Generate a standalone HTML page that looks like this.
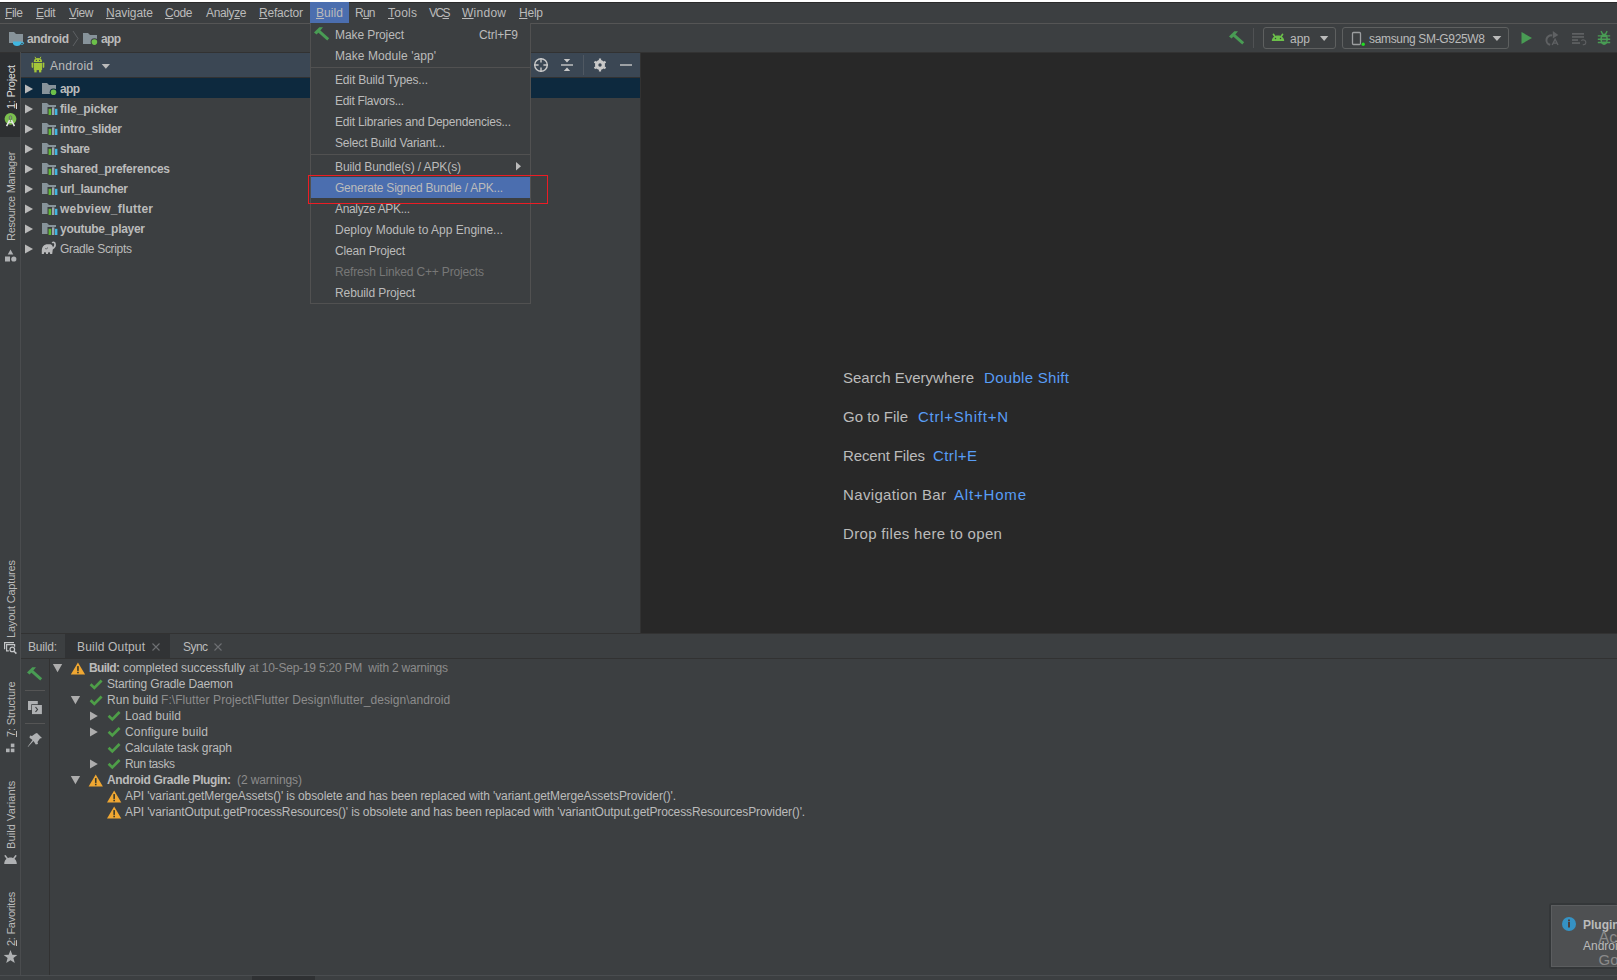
<!DOCTYPE html>
<html><head><meta charset="utf-8">
<style>
*{margin:0;padding:0;box-sizing:border-box}
html,body{width:1617px;height:980px;overflow:hidden;background:#3C3F41;font-family:"Liberation Sans",sans-serif;font-size:12px;color:#BBBBBB}
.a{position:absolute}
.t{position:absolute;white-space:pre;line-height:1}
u{text-decoration:underline;text-underline-offset:1px}
svg{position:absolute;overflow:visible}
</style></head><body>
<div class="a" style="left:0px;top:0px;width:1617px;height:2px;background:#FFFFFF;"></div>
<div class="a" style="left:0px;top:2px;width:1617px;height:1px;background:#2B2B2B;"></div>
<div class="a" style="left:0px;top:3px;width:1617px;height:20px;background:#3C3F41;"></div>
<div class="a" style="left:0px;top:23px;width:1617px;height:1px;background:#555555;"></div>
<div class="a" style="left:310px;top:2px;width:39px;height:21px;background:#4B6EAF;"></div>
<div class="a" style="left:0px;top:24px;width:1617px;height:28px;background:#3C3F41;"></div>
<div class="a" style="left:0px;top:52px;width:20px;height:923px;background:#3C3F41;"></div>
<div class="a" style="left:20px;top:52px;width:1px;height:923px;background:#4A4C4E;"></div>
<div class="a" style="left:0px;top:52px;width:20px;height:85px;background:#2D2F31;"></div>
<div class="a" style="left:21px;top:52px;width:619px;height:581px;background:#3C3F41;"></div>
<div class="a" style="left:21px;top:53px;width:619px;height:24px;background:#3B4754;"></div>
<div class="a" style="left:21px;top:77px;width:619px;height:1px;background:#323232;"></div>
<div class="a" style="left:21px;top:78px;width:619px;height:20px;background:#0D293E;"></div>
<div class="a" style="left:640px;top:52px;width:1px;height:581px;background:#323232;"></div>
<div class="a" style="left:641px;top:52px;width:976px;height:581px;background:#282828;"></div>
<div class="a" style="left:0px;top:52px;width:1617px;height:1px;background:#323232;"></div>
<div class="a" style="left:20px;top:52px;width:1px;height:923px;background:#4A4C4E;"></div>
<div class="a" style="left:21px;top:633px;width:1596px;height:1px;background:#323232;"></div>
<div class="a" style="left:21px;top:658px;width:1596px;height:1px;background:#323232;"></div>
<div class="a" style="left:65px;top:634px;width:105px;height:24px;background:#313335;"></div>
<div class="a" style="left:49px;top:659px;width:1px;height:316px;background:#323232;"></div>
<div class="a" style="left:0px;top:975px;width:1617px;height:1px;background:#4A4D50;"></div>
<div class="a" style="left:252px;top:976px;width:63px;height:4px;background:#2F3133;"></div>
<div class="t" style="left:5px;top:6.84px;font-size:12px;letter-spacing:-0.448px;color:#BBBBBB;"><u>F</u>ile</div>
<div class="t" style="left:36px;top:6.84px;font-size:12px;letter-spacing:-0.391px;color:#BBBBBB;"><u>E</u>dit</div>
<div class="t" style="left:69px;top:6.84px;font-size:12px;letter-spacing:-0.432px;color:#BBBBBB;"><u>V</u>iew</div>
<div class="t" style="left:106px;top:6.84px;font-size:12px;letter-spacing:-0.051px;color:#BBBBBB;"><u>N</u>avigate</div>
<div class="t" style="left:165px;top:6.84px;font-size:12px;letter-spacing:-0.396px;color:#BBBBBB;"><u>C</u>ode</div>
<div class="t" style="left:206px;top:6.84px;font-size:12px;letter-spacing:-0.365px;color:#BBBBBB;">Analy<u>z</u>e</div>
<div class="t" style="left:259px;top:6.84px;font-size:12px;letter-spacing:-0.192px;color:#BBBBBB;"><u>R</u>efactor</div>
<div class="t" style="left:316px;top:6.84px;font-size:12px;letter-spacing:0.078px;color:#BBBBBB;"><u>B</u>uild</div>
<div class="t" style="left:355px;top:6.84px;font-size:12px;letter-spacing:-0.758px;color:#BBBBBB;">R<u>u</u>n</div>
<div class="t" style="left:388px;top:6.84px;font-size:12px;letter-spacing:0.246px;color:#BBBBBB;"><u>T</u>ools</div>
<div class="t" style="left:429px;top:6.84px;font-size:12px;letter-spacing:-1.586px;color:#BBBBBB;">VC<u>S</u></div>
<div class="t" style="left:462px;top:6.84px;font-size:12px;letter-spacing:0.263px;color:#BBBBBB;"><u>W</u>indow</div>
<div class="t" style="left:519px;top:6.84px;font-size:12px;letter-spacing:-0.229px;color:#BBBBBB;"><u>H</u>elp</div>
<div class="t" style="left:27px;top:32.84px;font-size:12px;letter-spacing:-0.331px;color:#BBBBBB;font-weight:bold;">android</div>
<div class="t" style="left:101px;top:32.84px;font-size:12px;letter-spacing:-0.664px;color:#BBBBBB;font-weight:bold;">app</div>
<div class="t" style="left:1290px;top:32.84px;font-size:12px;letter-spacing:-0.008px;color:#BBBBBB;">app</div>
<div class="t" style="left:1369px;top:32.84px;font-size:12px;letter-spacing:-0.335px;color:#BBBBBB;">samsung SM-G925W8</div>
<div class="a" style="left:1263px;top:27px;width:73px;height:22px;background:transparent;border:1px solid #5E6060;border-radius:3px;"></div>
<div class="a" style="left:1342px;top:27px;width:167px;height:22px;background:transparent;border:1px solid #5E6060;border-radius:3px;"></div>
<div class="a" style="left:1253px;top:28px;width:1px;height:20px;background:#505254;"></div>
<div class="t" style="left:50px;top:59.84px;font-size:12px;letter-spacing:0.273px;color:#BBBBBB;">Android</div>
<div class="a" style="left:583px;top:55px;width:1px;height:20px;background:#4F5862;"></div>
<div class="t" style="left:60px;top:82.84px;font-size:12px;letter-spacing:-0.664px;color:#BBBBBB;font-weight:bold;">app</div>
<div class="t" style="left:60px;top:102.84px;font-size:12px;letter-spacing:-0.134px;color:#BBBBBB;font-weight:bold;">file_picker</div>
<div class="t" style="left:60px;top:122.84px;font-size:12px;letter-spacing:-0.303px;color:#BBBBBB;font-weight:bold;">intro_slider</div>
<div class="t" style="left:60px;top:142.84px;font-size:12px;letter-spacing:-0.504px;color:#BBBBBB;font-weight:bold;">share</div>
<div class="t" style="left:60px;top:162.84px;font-size:12px;letter-spacing:-0.238px;color:#BBBBBB;font-weight:bold;">shared_preferences</div>
<div class="t" style="left:60px;top:182.84px;font-size:12px;letter-spacing:-0.364px;color:#BBBBBB;font-weight:bold;">url_launcher</div>
<div class="t" style="left:60px;top:202.84px;font-size:12px;letter-spacing:0.214px;color:#BBBBBB;font-weight:bold;">webview_flutter</div>
<div class="t" style="left:60px;top:222.84px;font-size:12px;letter-spacing:-0.282px;color:#BBBBBB;font-weight:bold;">youtube_player</div>
<div class="t" style="left:60px;top:242.84px;font-size:12px;letter-spacing:-0.309px;color:#BBBBBB;">Gradle Scripts</div>
<div class="t" style="left:843px;top:370.30px;font-size:15px;letter-spacing:0.006px;color:#BBBBBB;">Search Everywhere</div>
<div class="t" style="left:984px;top:370.30px;font-size:15px;letter-spacing:0.298px;color:#589DF6;">Double Shift</div>
<div class="t" style="left:843px;top:409.30px;font-size:15px;letter-spacing:-0.003px;color:#BBBBBB;">Go to File</div>
<div class="t" style="left:918px;top:409.30px;font-size:15px;letter-spacing:0.754px;color:#589DF6;">Ctrl+Shift+N</div>
<div class="t" style="left:843px;top:448.30px;font-size:15px;letter-spacing:-0.124px;color:#BBBBBB;">Recent Files</div>
<div class="t" style="left:933px;top:448.30px;font-size:15px;letter-spacing:0.381px;color:#589DF6;">Ctrl+E</div>
<div class="t" style="left:843px;top:487.30px;font-size:15px;letter-spacing:0.355px;color:#BBBBBB;">Navigation Bar</div>
<div class="t" style="left:954px;top:487.30px;font-size:15px;letter-spacing:0.817px;color:#589DF6;">Alt+Home</div>
<div class="t" style="left:843px;top:526.30px;font-size:15px;letter-spacing:0.327px;color:#BBBBBB;">Drop files here to open</div>
<div class="t" style="left:28px;top:640.84px;font-size:12px;letter-spacing:-0.203px;color:#BBBBBB;">Build:</div>
<div class="t" style="left:77px;top:640.84px;font-size:12px;letter-spacing:0.180px;color:#BBBBBB;">Build Output</div>
<div class="t" style="left:183px;top:640.84px;font-size:12px;letter-spacing:-0.557px;color:#BBBBBB;">Sync</div>
<div class="t" style="left:89px;top:661.84px;font-size:12px;letter-spacing:-0.597px;color:#BBBBBB;font-weight:bold;">Build:</div>
<div class="t" style="left:123px;top:661.84px;font-size:12px;letter-spacing:-0.065px;color:#BBBBBB;">completed successfully</div>
<div class="t" style="left:249px;top:661.84px;font-size:12px;letter-spacing:-0.214px;color:#8C8C8C;">at 10-Sep-19 5:20 PM  with 2 warnings</div>
<div class="t" style="left:107px;top:677.84px;font-size:12px;letter-spacing:-0.161px;color:#BBBBBB;">Starting Gradle Daemon</div>
<div class="t" style="left:107px;top:693.84px;font-size:12px;letter-spacing:0.037px;color:#BBBBBB;">Run build</div>
<div class="t" style="left:161px;top:693.84px;font-size:12px;letter-spacing:0.066px;color:#8C8C8C;">F:\Flutter Project\Flutter Design\flutter_design\android</div>
<div class="t" style="left:125px;top:709.84px;font-size:12px;letter-spacing:0.069px;color:#BBBBBB;">Load build</div>
<div class="t" style="left:125px;top:725.84px;font-size:12px;letter-spacing:0.163px;color:#BBBBBB;">Configure build</div>
<div class="t" style="left:125px;top:741.84px;font-size:12px;letter-spacing:-0.125px;color:#BBBBBB;">Calculate task graph</div>
<div class="t" style="left:125px;top:757.84px;font-size:12px;letter-spacing:-0.418px;color:#BBBBBB;">Run tasks</div>
<div class="t" style="left:107px;top:773.84px;font-size:12px;letter-spacing:-0.347px;color:#BBBBBB;font-weight:bold;">Android Gradle Plugin:</div>
<div class="t" style="left:237px;top:773.84px;font-size:12px;letter-spacing:-0.094px;color:#8C8C8C;">(2 warnings)</div>
<div class="t" style="left:125px;top:789.84px;font-size:12px;letter-spacing:-0.106px;color:#BBBBBB;">API 'variant.getMergeAssets()' is obsolete and has been replaced with 'variant.getMergeAssetsProvider()'.</div>
<div class="t" style="left:125px;top:805.84px;font-size:12px;letter-spacing:-0.122px;color:#BBBBBB;">API 'variantOutput.getProcessResources()' is obsolete and has been replaced with 'variantOutput.getProcessResourcesProvider()'.</div>
<div class="a" style="left:310px;top:23px;width:221px;height:281px;background:#3C3F41;border:1px solid #515151;border-top:none;"></div>
<div class="a" style="left:311px;top:67px;width:219px;height:1px;background:#515151;"></div>
<div class="a" style="left:311px;top:154px;width:219px;height:1px;background:#515151;"></div>
<div class="a" style="left:311px;top:177px;width:219px;height:21px;background:#4B6EAF;"></div>
<div class="t" style="left:335px;top:28.84px;font-size:12px;letter-spacing:-0.092px;color:#BBBBBB;">Make Project</div>
<div class="t" style="left:335px;top:49.84px;font-size:12px;letter-spacing:0.064px;color:#BBBBBB;">Make Module 'app'</div>
<div class="t" style="left:335px;top:73.84px;font-size:12px;letter-spacing:-0.155px;color:#BBBBBB;">Edit Build Types...</div>
<div class="t" style="left:335px;top:94.84px;font-size:12px;letter-spacing:-0.309px;color:#BBBBBB;">Edit Flavors...</div>
<div class="t" style="left:335px;top:115.84px;font-size:12px;letter-spacing:-0.224px;color:#BBBBBB;">Edit Libraries and Dependencies...</div>
<div class="t" style="left:335px;top:136.84px;font-size:12px;letter-spacing:-0.173px;color:#BBBBBB;">Select Build Variant...</div>
<div class="t" style="left:335px;top:160.84px;font-size:12px;letter-spacing:-0.118px;color:#BBBBBB;">Build Bundle(s) / APK(s)</div>
<div class="t" style="left:335px;top:181.84px;font-size:12px;letter-spacing:-0.223px;color:#BBBBBB;">Generate Signed Bundle / APK...</div>
<div class="t" style="left:335px;top:202.84px;font-size:12px;letter-spacing:-0.334px;color:#BBBBBB;">Analyze APK...</div>
<div class="t" style="left:335px;top:223.84px;font-size:12px;letter-spacing:-0.002px;color:#BBBBBB;">Deploy Module to App Engine...</div>
<div class="t" style="left:335px;top:244.84px;font-size:12px;letter-spacing:-0.169px;color:#BBBBBB;">Clean Project</div>
<div class="t" style="left:335px;top:265.84px;font-size:12px;letter-spacing:-0.169px;color:#777777;">Refresh Linked C++ Projects</div>
<div class="t" style="left:335px;top:286.84px;font-size:12px;letter-spacing:-0.098px;color:#BBBBBB;">Rebuild Project</div>
<div class="t" style="left:479px;top:28.84px;font-size:12px;letter-spacing:-0.115px;color:#BBBBBB;">Ctrl+F9</div>
<div class="a" style="left:308px;top:175px;width:240px;height:29px;background:transparent;border:1px solid #EC1C24;"></div>
<svg style="left:20px;top:82.5px" width="20" height="12" viewBox="20 82.5 20 12"><path d="M25 84.0 L33 88.5 L25 93.0 Z" fill="#B9B9B9"/></svg>
<svg style="left:20px;top:102.5px" width="20" height="12" viewBox="20 102.5 20 12"><path d="M25 104.0 L33 108.5 L25 113.0 Z" fill="#B9B9B9"/></svg>
<svg style="left:20px;top:122.5px" width="20" height="12" viewBox="20 122.5 20 12"><path d="M25 124.0 L33 128.5 L25 133.0 Z" fill="#B9B9B9"/></svg>
<svg style="left:20px;top:142.5px" width="20" height="12" viewBox="20 142.5 20 12"><path d="M25 144.0 L33 148.5 L25 153.0 Z" fill="#B9B9B9"/></svg>
<svg style="left:20px;top:162.5px" width="20" height="12" viewBox="20 162.5 20 12"><path d="M25 164.0 L33 168.5 L25 173.0 Z" fill="#B9B9B9"/></svg>
<svg style="left:20px;top:182.5px" width="20" height="12" viewBox="20 182.5 20 12"><path d="M25 184.0 L33 188.5 L25 193.0 Z" fill="#B9B9B9"/></svg>
<svg style="left:20px;top:202.5px" width="20" height="12" viewBox="20 202.5 20 12"><path d="M25 204.0 L33 208.5 L25 213.0 Z" fill="#B9B9B9"/></svg>
<svg style="left:20px;top:222.5px" width="20" height="12" viewBox="20 222.5 20 12"><path d="M25 224.0 L33 228.5 L25 233.0 Z" fill="#B9B9B9"/></svg>
<svg style="left:20px;top:242.5px" width="20" height="12" viewBox="20 242.5 20 12"><path d="M25 244.0 L33 248.5 L25 253.0 Z" fill="#B9B9B9"/></svg>
<svg style="left:40px;top:80px" width="20" height="18" viewBox="40 80 20 18"><path d="M42 83 h5 l2 2 h7 v9 h-14 z" fill="#87939A"/><circle cx="53.5" cy="92.3" r="3.8" fill="#0D293E"/><circle cx="53.5" cy="92.3" r="2.8" fill="#6CC04A"/></svg>
<svg style="left:40px;top:101px" width="20" height="18" viewBox="40 101 20 18"><path d="M42 103 h5 l2 2 h7 v9 h-14 z" fill="#87939A"/><rect x="47.5" y="107" width="10.5" height="9" fill="#3C3F41"/><rect x="48.6" y="108.8" width="2.6" height="6.2" fill="#5FB832"/><rect x="52" y="107.3" width="2.4" height="7.7" fill="#9AA7B0"/><rect x="55" y="108.8" width="2.4" height="6.2" fill="#40B6E0"/></svg>
<svg style="left:40px;top:121px" width="20" height="18" viewBox="40 121 20 18"><path d="M42 123 h5 l2 2 h7 v9 h-14 z" fill="#87939A"/><rect x="47.5" y="127" width="10.5" height="9" fill="#3C3F41"/><rect x="48.6" y="128.8" width="2.6" height="6.2" fill="#5FB832"/><rect x="52" y="127.3" width="2.4" height="7.7" fill="#9AA7B0"/><rect x="55" y="128.8" width="2.4" height="6.2" fill="#40B6E0"/></svg>
<svg style="left:40px;top:141px" width="20" height="18" viewBox="40 141 20 18"><path d="M42 143 h5 l2 2 h7 v9 h-14 z" fill="#87939A"/><rect x="47.5" y="147" width="10.5" height="9" fill="#3C3F41"/><rect x="48.6" y="148.8" width="2.6" height="6.2" fill="#5FB832"/><rect x="52" y="147.3" width="2.4" height="7.7" fill="#9AA7B0"/><rect x="55" y="148.8" width="2.4" height="6.2" fill="#40B6E0"/></svg>
<svg style="left:40px;top:161px" width="20" height="18" viewBox="40 161 20 18"><path d="M42 163 h5 l2 2 h7 v9 h-14 z" fill="#87939A"/><rect x="47.5" y="167" width="10.5" height="9" fill="#3C3F41"/><rect x="48.6" y="168.8" width="2.6" height="6.2" fill="#5FB832"/><rect x="52" y="167.3" width="2.4" height="7.7" fill="#9AA7B0"/><rect x="55" y="168.8" width="2.4" height="6.2" fill="#40B6E0"/></svg>
<svg style="left:40px;top:181px" width="20" height="18" viewBox="40 181 20 18"><path d="M42 183 h5 l2 2 h7 v9 h-14 z" fill="#87939A"/><rect x="47.5" y="187" width="10.5" height="9" fill="#3C3F41"/><rect x="48.6" y="188.8" width="2.6" height="6.2" fill="#5FB832"/><rect x="52" y="187.3" width="2.4" height="7.7" fill="#9AA7B0"/><rect x="55" y="188.8" width="2.4" height="6.2" fill="#40B6E0"/></svg>
<svg style="left:40px;top:201px" width="20" height="18" viewBox="40 201 20 18"><path d="M42 203 h5 l2 2 h7 v9 h-14 z" fill="#87939A"/><rect x="47.5" y="207" width="10.5" height="9" fill="#3C3F41"/><rect x="48.6" y="208.8" width="2.6" height="6.2" fill="#5FB832"/><rect x="52" y="207.3" width="2.4" height="7.7" fill="#9AA7B0"/><rect x="55" y="208.8" width="2.4" height="6.2" fill="#40B6E0"/></svg>
<svg style="left:40px;top:221px" width="20" height="18" viewBox="40 221 20 18"><path d="M42 223 h5 l2 2 h7 v9 h-14 z" fill="#87939A"/><rect x="47.5" y="227" width="10.5" height="9" fill="#3C3F41"/><rect x="48.6" y="228.8" width="2.6" height="6.2" fill="#5FB832"/><rect x="52" y="227.3" width="2.4" height="7.7" fill="#9AA7B0"/><rect x="55" y="228.8" width="2.4" height="6.2" fill="#40B6E0"/></svg>
<svg style="left:38px;top:238px" width="22" height="20" viewBox="38 238 22 20"><path d="M41.8 254 L41.8 250 C42 247 43.5 244.8 46.5 244.2 L50.5 244.2 C52 244.6 52.8 246 53 247.5 L52.6 251 L52.2 254 L50.2 254 L49.8 252.3 L48.3 252.3 L47.9 254 L46.1 254 L45.7 252.3 L44.2 252.3 L43.8 254 Z" fill="#B8B9BA"/><path d="M52 249 C54.5 247.5 55.5 245 54.8 243.2 C54.3 242 53 242 52.3 243" fill="none" stroke="#B8B9BA" stroke-width="1.7"/><path d="M45.2 248.6 Q46.6 249.4 48 247.6" fill="none" stroke="#55585A" stroke-width="0.9"/></svg>
<svg style="left:5px;top:28px" width="25" height="22" viewBox="5 28 25 22"><path d="M9 32 h5 l2 2 h7 v9 h-14 z" fill="#87939A"/><path d="M13 41.5 h8 v1.8 c0 1.6 -1.6 2.7 -4 2.7 c-2.4 0 -4 -1.1 -4 -2.7 z" fill="#40B6E0"/><ellipse cx="22" cy="43.2" rx="1.7" ry="1.1" fill="none" stroke="#40B6E0" stroke-width="1"/></svg>
<svg style="left:70px;top:28px" width="12" height="20" viewBox="70 28 12 20"><path d="M73 31 L78 38.5 L73 46" fill="none" stroke="#5E6164" stroke-width="1"/></svg>
<svg style="left:80px;top:30px" width="20" height="18" viewBox="80 30 20 18"><path d="M83 33 h5 l2 2 h7 v9 h-14 z" fill="#87939A"/><circle cx="94.4" cy="42.1" r="3.8" fill="#3C3F41"/><circle cx="94.4" cy="42.1" r="2.8" fill="#6CC04A"/></svg>
<svg style="left:28px;top:54px" width="20" height="22" viewBox="28 54 20 22"><g fill="#A4C639"><path d="M33.8 62 a4.15 4 0 0 1 8.3 0 z"/><rect x="33.8" y="62.9" width="8.3" height="7.2"/><rect x="31.6" y="62.5" width="1.6" height="5.4" rx="0.8"/><rect x="42.7" y="62.5" width="1.6" height="5.4" rx="0.8"/><rect x="34.3" y="69" width="2.3" height="3.4"/><rect x="39" y="69" width="2.3" height="3.4"/><path d="M35 56.8 L36 58.8 M40.9 56.8 L39.9 58.8" stroke="#A4C639" stroke-width="1"/></g><circle cx="36.4" cy="60.4" r="0.6" fill="#3B4754"/><circle cx="39.6" cy="60.4" r="0.6" fill="#3B4754"/></svg>
<svg style="left:98px;top:60px" width="16" height="12" viewBox="98 60 16 12"><path d="M101.7 64 h8.3 l-4.15 4.7 z" fill="#BBBBBB"/></svg>
<svg style="left:530px;top:55px" width="20" height="20" viewBox="530 55 20 20"><circle cx="541" cy="65" r="6.3" fill="none" stroke="#C9C9C9" stroke-width="1.4"/><path d="M541 58 v4.6 M541 67.4 v4.6 M534 65 h4.6 M543.4 65 h4.6" stroke="#C9C9C9" stroke-width="1.4"/></svg>
<svg style="left:558px;top:55px" width="20" height="20" viewBox="558 55 20 20"><path d="M561 65 h12" stroke="#C9C9C9" stroke-width="1.4"/><path d="M563.8 59 h6.4 l-3.2 3.6 z M563.8 71 h6.4 l-3.2 -3.6 z" fill="#C9C9C9"/></svg>
<svg style="left:590px;top:55px" width="20" height="20" viewBox="590 55 20 20"><g fill="#C9C9C9"><circle cx="600" cy="65" r="5"/><path d="M598.9 58.6 h2.2 v2.6 h-2.2 z M598.9 68.8 h2.2 v2.6 h-2.2 z" /><path d="M598.9 58.6 h2.2 v2.6 h-2.2 z M598.9 68.8 h2.2 v2.6 h-2.2 z" transform="rotate(60 600 65)"/><path d="M598.9 58.6 h2.2 v2.6 h-2.2 z M598.9 68.8 h2.2 v2.6 h-2.2 z" transform="rotate(120 600 65)"/></g><circle cx="600" cy="65" r="1.7" fill="#3B4754"/></svg>
<svg style="left:615px;top:58px" width="22" height="14" viewBox="615 58 22 14"><path d="M620 65 h12" stroke="#C9C9C9" stroke-width="1.4"/></svg>
<svg style="left:1225px;top:28px" width="22" height="22" viewBox="1225 28 22 22"><path d="M1229 36.5 L1234.3 31.2 L1238 31.2 L1235.3 34.4 L1231.6 38.4 Z" fill="#499C54"/><path d="M1233.6 34.8 L1243.2 43.4" stroke="#499C54" stroke-width="2.9"/></svg>
<svg style="left:1270px;top:30px" width="18" height="16" viewBox="1270 30 18 16"><path d="M1271.8 41 C1271.8 37.3 1274.8 35.4 1278 35.4 C1281.2 35.4 1284.2 37.3 1284.2 41 Z" fill="#6CC04A"/><path d="M1273.4 34.3 L1275.4 37.2 M1282.6 34.3 L1280.6 37.2" stroke="#6CC04A" stroke-width="1.6" stroke-linecap="round"/><circle cx="1275.5" cy="38.5" r="0.75" fill="#3C3F41"/><circle cx="1280.5" cy="38.5" r="0.75" fill="#3C3F41"/></svg>
<svg style="left:1316px;top:33px" width="16" height="10" viewBox="1316 33 16 10"><path d="M1320 36 h8.3 l-4.15 5 z" fill="#BBBBBB"/></svg>
<svg style="left:1348px;top:30px" width="20" height="18" viewBox="1348 30 20 18"><rect x="1352.5" y="32.5" width="8" height="12" rx="1" fill="none" stroke="#9C9EA0" stroke-width="1.3"/><circle cx="1363.2" cy="44.2" r="2.4" fill="#3C3F41"/><circle cx="1363.2" cy="44.2" r="1.7" fill="#22DD22"/></svg>
<svg style="left:1488px;top:33px" width="16" height="10" viewBox="1488 33 16 10"><path d="M1492.6 36 h8.7 l-4.35 5 z" fill="#BBBBBB"/></svg>
<svg style="left:1518px;top:30px" width="18" height="18" viewBox="1518 30 18 18"><path d="M1521.5 32 L1532 38 L1521.5 44 Z" fill="#499C54"/></svg>
<svg style="left:1541px;top:29px" width="22" height="20" viewBox="1541 29 22 20"><path d="M1552.2 35.4 A4.7 4.7 0 1 0 1550.2 44.7" fill="none" stroke="#5F6163" stroke-width="2"/><path d="M1552.8 31 L1558.3 35 L1552.8 38.6 Z" fill="#5F6163"/><path d="M1552.2 45 L1555.1 39.3 L1558 45 M1553.4 43.1 h3.4" stroke="#5F6163" stroke-width="1.4" fill="none"/></svg>
<svg style="left:1568px;top:29px" width="22" height="20" viewBox="1568 29 22 20"><g fill="#5F6163"><rect x="1572" y="33" width="12" height="1.7"/><rect x="1572" y="36.1" width="12" height="1.7"/><rect x="1572" y="39.2" width="6" height="1.7"/><rect x="1572" y="42.2" width="8" height="1.7"/></g><path d="M1581.2 40.5 L1583 39.8 C1585.5 40 1586.3 42 1585.6 43.4 C1585 44.6 1583.6 45 1582.8 44.6" fill="none" stroke="#5F6163" stroke-width="1.1"/></svg>
<svg style="left:1594px;top:29px" width="22" height="20" viewBox="1594 29 22 20"><ellipse cx="1604.1" cy="39.2" rx="3.8" ry="5.8" fill="#499C54"/><path d="M1601 31.2 L1602.8 34.3 M1607.2 31.2 L1605.4 34.3 M1597.8 35.9 h12.4 M1597.8 39.2 h12.4 M1597.8 42.5 h12.4" stroke="#499C54" stroke-width="1.4"/><path d="M1602 37.9 h4.2 M1602 40.9 h4.2" stroke="#3C3F41" stroke-width="1.1"/></svg>
<svg style="left:313px;top:26px" width="18" height="18" viewBox="313 26 18 18"><path d="M314 32.5 L319.3 27.2 L323 27.2 L320.3 30.4 L316.6 34.4 Z" fill="#499C54"/><path d="M318.6 30.8 L328.2 39.4" stroke="#499C54" stroke-width="2.9"/></svg>
<svg style="left:512px;top:160px" width="12" height="14" viewBox="512 160 12 14"><path d="M516 162 L521 166.2 L516 170.5 Z" fill="#BBBBBB"/></svg>
<svg style="left:2px;top:110px" width="18" height="19" viewBox="2 110 18 19"><circle cx="10.5" cy="118.8" r="5.9" fill="#7BBF4E"/><path d="M6.6 126.2 L9.6 120.2 M14.4 126.2 L11.4 120.2" stroke="#E6E6E6" stroke-width="1.5"/><path d="M8.6 122.6 h3.8" stroke="#E6E6E6" stroke-width="0.9"/><ellipse cx="10.5" cy="117.8" rx="1.3" ry="2" fill="none" stroke="#6A6E70" stroke-width="1"/></svg>
<svg style="left:3px;top:248px" width="16" height="16" viewBox="3 248 16 16"><g fill="#AFB1B3"><path d="M10.5 249.5 L13.3 254.5 L7.7 254.5 Z"/><rect x="5" y="256.5" width="5" height="5"/><circle cx="13.8" cy="259" r="2.6"/></g></svg>
<svg style="left:2px;top:638px" width="18" height="18" viewBox="2 638 18 18"><g fill="none" stroke="#C4C6C8" stroke-width="1.2"><path d="M4.6 649.3 V642.6 H14"/><path d="M8.8 650.9 H6.6 V644.6 H14.6 V646.8"/><circle cx="12.3" cy="649.4" r="2.3"/><path d="M14 651.2 L16.4 653.6" stroke-width="1.5"/></g></svg>
<svg style="left:4px;top:741px" width="14" height="14" viewBox="4 741 14 14"><g fill="#AFB1B3"><rect x="10.8" y="743.6" width="3.6" height="3.6"/><rect x="6" y="748.6" width="3.6" height="3.6"/><rect x="10.8" y="748.6" width="3.6" height="3.6"/></g></svg>
<svg style="left:2px;top:850px" width="18" height="16" viewBox="2 850 18 16"><path d="M4.2 864 C4.2 859.8 7.2 857.6 10.5 857.6 C13.8 857.6 16.8 859.8 16.8 864 Z" fill="#AFB1B3"/><path d="M5.2 855.8 L7.6 859 M15.8 855.8 L13.4 859" stroke="#AFB1B3" stroke-width="1.5" stroke-linecap="round"/></svg>
<svg style="left:2px;top:948px" width="18" height="16" viewBox="2 948 18 16"><path d="M10.5 950 L12.3 954.8 L17.3 955 L13.4 958.1 L14.8 963 L10.5 960.2 L6.2 963 L7.6 958.1 L3.7 955 L8.7 954.8 Z" fill="#AFB1B3"/></svg>
<svg style="left:24px;top:664px" width="22" height="20" viewBox="24 664 22 20"><path d="M27 672.5 L32.3 667.2 L36 667.2 L33.3 670.4 L29.6 674.4 Z" fill="#499C54"/><path d="M31.6 670.8 L41.2 679.4" stroke="#499C54" stroke-width="2.9"/></svg>
<div class="a" style="left:25px;top:690px;width:20px;height:1px;background:#555555;"></div>
<svg style="left:25px;top:698px" width="20" height="18" viewBox="25 698 20 18"><rect x="28" y="701" width="9.8" height="9" fill="#AFB1B3"/><rect x="31.3" y="704.2" width="11.2" height="10.5" fill="#3C3F41"/><rect x="32" y="705" width="9.9" height="9.1" fill="#AFB1B3"/><path d="M35.5 707 L37.5 709.5 L35.5 712" stroke="#3C3F41" stroke-width="1.2" fill="none"/></svg>
<div class="a" style="left:25px;top:723px;width:20px;height:1px;background:#555555;"></div>
<svg style="left:25px;top:730px" width="20" height="20" viewBox="25 730 20 20"><path d="M37 733 L42 738 L40 738.5 L37.5 742 L38 744 L35.8 744.5 L33.5 741 L28 747 L27.7 746.7 L32.5 740 L29.5 737.8 L30 735.5 L32 736 L35.5 733.6 Z" fill="#AFB1B3"/></svg>
<svg style="left:40px;top:655px" width="100" height="170" viewBox="40 655 100 170"><path d="M52.9 663.9 h9.3 l-4.65 8.3 z" fill="#ADADAD"/><path d="M77.95 662.4 L85.1 674.4 L70.8 674.4 Z" fill="#F0A732"/><rect x="77.14999999999999" y="666.1" width="1.6" height="4.8" fill="#3A3A2A"/><rect x="77.14999999999999" y="671.6999999999999" width="1.6" height="1.6" fill="#3A3A2A"/><path d="M90.6 684.3 L94.3 687.9 L101.6 680.5" stroke="#4E9E48" stroke-width="2.7" fill="none"/><path d="M70.8 695.9 h9.3 l-4.65 8.3 z" fill="#ADADAD"/><path d="M90.6 700.3 L94.3 703.9 L101.6 696.5" stroke="#4E9E48" stroke-width="2.7" fill="none"/><path d="M90 711.5 l7.8 4.5 l-7.8 4.5 z" fill="#ADADAD"/><path d="M108.6 715.8 L112.3 719.4 L119.6 712" stroke="#4E9E48" stroke-width="2.7" fill="none"/><path d="M90 727.5 l7.8 4.5 l-7.8 4.5 z" fill="#ADADAD"/><path d="M108.6 731.8 L112.3 735.4 L119.6 728" stroke="#4E9E48" stroke-width="2.7" fill="none"/><path d="M108.6 747.8 L112.3 751.4 L119.6 744" stroke="#4E9E48" stroke-width="2.7" fill="none"/><path d="M90 759.5 l7.8 4.5 l-7.8 4.5 z" fill="#ADADAD"/><path d="M108.6 763.8 L112.3 767.4 L119.6 760" stroke="#4E9E48" stroke-width="2.7" fill="none"/><path d="M70.8 775.9 h9.3 l-4.65 8.3 z" fill="#ADADAD"/><path d="M95.75 774.4 L102.89999999999999 786.4 L88.6 786.4 Z" fill="#F0A732"/><rect x="94.94999999999999" y="778.1" width="1.6" height="4.8" fill="#3A3A2A"/><rect x="94.94999999999999" y="783.6999999999999" width="1.6" height="1.6" fill="#3A3A2A"/><path d="M114.15 790.4 L121.3 802.4 L107 802.4 Z" fill="#F0A732"/><rect x="113.35" y="794.1" width="1.6" height="4.8" fill="#3A3A2A"/><rect x="113.35" y="799.6999999999999" width="1.6" height="1.6" fill="#3A3A2A"/><path d="M114.15 806.4 L121.3 818.4 L107 818.4 Z" fill="#F0A732"/><rect x="113.35" y="810.1" width="1.6" height="4.8" fill="#3A3A2A"/><rect x="113.35" y="815.6999999999999" width="1.6" height="1.6" fill="#3A3A2A"/></svg>
<svg style="left:150px;top:640px" width="30" height="14" viewBox="150 640 30 14"><path d="M152.5 643.5 L159.5 650.5 M159.5 643.5 L152.5 650.5" stroke="#6E7073" stroke-width="1.1"/><path d="M214.5 643.5 L221.5 650.5 M221.5 643.5 L214.5 650.5" stroke="#6E7073" stroke-width="1.1"/></svg>
<div class="t" style="left:6.09px;top:108.9px;font-size:11px;letter-spacing:-0.278px;color:#DDDDDD;transform:rotate(-90deg);transform-origin:0 0"><u>1</u>: Project</div>
<div class="t" style="left:6.09px;top:240.8px;font-size:11px;letter-spacing:-0.273px;color:#BBBBBB;transform:rotate(-90deg);transform-origin:0 0">Resource Manager</div>
<div class="t" style="left:6.09px;top:637.6px;font-size:11px;letter-spacing:-0.199px;color:#BBBBBB;transform:rotate(-90deg);transform-origin:0 0">Layout Captures</div>
<div class="t" style="left:6.09px;top:737px;font-size:11px;letter-spacing:-0.119px;color:#BBBBBB;transform:rotate(-90deg);transform-origin:0 0"><u>7</u>: Structure</div>
<div class="t" style="left:6.09px;top:848.6px;font-size:11px;letter-spacing:0.100px;color:#BBBBBB;transform:rotate(-90deg);transform-origin:0 0">Build Variants</div>
<div class="t" style="left:6.09px;top:946px;font-size:11px;letter-spacing:-0.282px;color:#BBBBBB;transform:rotate(-90deg);transform-origin:0 0"><u>2</u>: Favorites</div>
<div class="a" style="left:1549px;top:903px;width:68px;height:66px;background:rgba(0,0,0,0.12);border-radius:3px;"></div>
<div class="a" style="left:1551px;top:905px;width:66px;height:62px;background:#4E5052;border:1px solid #5B5D5F;border-right:none;"></div>
<svg style="left:1560px;top:915px" width="18" height="18" viewBox="1560 915 18 18"><circle cx="1569" cy="924" r="7" fill="#3592C4"/><rect x="1568" y="922" width="2" height="5.5" fill="#4E3F3A"/><rect x="1568" y="919.5" width="2" height="1.8" fill="#4E3F3A"/></svg>
<div class="t" style="left:1583px;top:918.84px;font-size:12px;letter-spacing:0.000px;color:#BBBBBB;font-weight:bold;">Plugin Updates</div>
<div class="t" style="left:1598.5px;top:929.96px;font-size:16px;letter-spacing:0.000px;color:#8A8A8A;">Activate Windows</div>
<div class="t" style="left:1583px;top:939.84px;font-size:12px;letter-spacing:0.000px;color:#BBBBBB;">Android Gradle</div>
<div class="t" style="left:1598.5px;top:952.30px;font-size:15px;letter-spacing:0.000px;color:#8A8A8A;">Go to Settings</div>
</body></html>
